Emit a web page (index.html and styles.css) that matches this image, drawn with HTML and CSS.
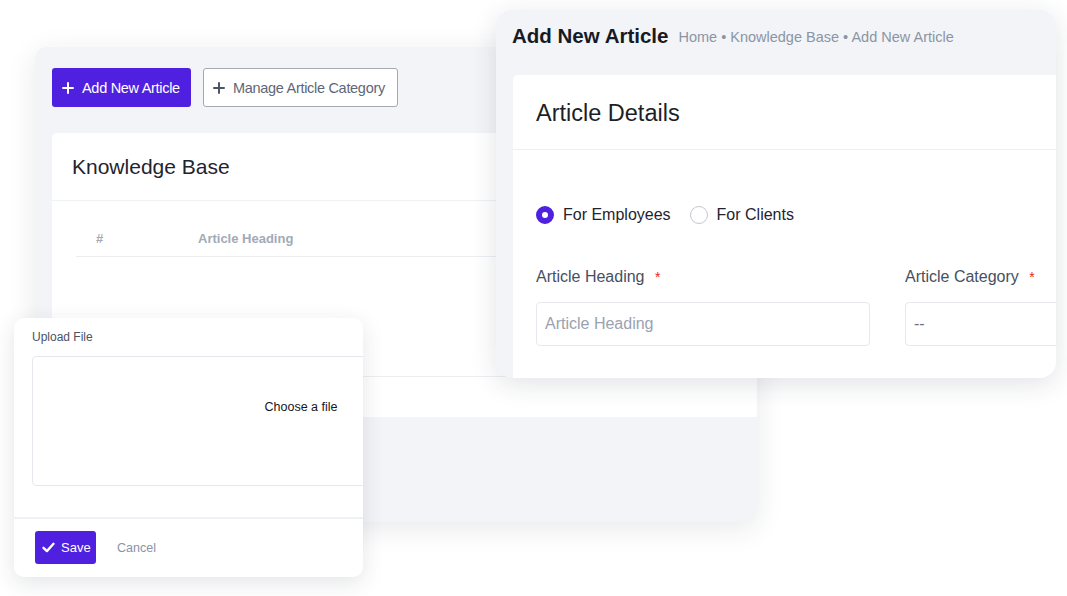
FILE: index.html
```html
<!DOCTYPE html>
<html lang="en">
<head>
<meta charset="UTF-8">
<meta name="viewport" content="width=device-width, initial-scale=1.0">
<title>Knowledge Base</title>
<link rel="stylesheet" href="styles.css">
</head>
<body>

<div class="stage">

  <!-- back window: knowledge base list -->
  <div class="window kb-window">
    <div class="toolbar">
      <button class="btn btn-primary">
        <svg width="12" height="12" viewBox="0 0 12 12"><path d="M6 1v10M1 6h10" stroke="#fff" stroke-width="2" stroke-linecap="round"/></svg>
        Add New Article
      </button>
      <button class="btn btn-outline">
        <svg width="12" height="12" viewBox="0 0 12 12"><path d="M6 1v10M1 6h10" stroke="#4b5563" stroke-width="2" stroke-linecap="round"/></svg>
        Manage Article Category
      </button>
    </div>

    <div class="kb-card">
      <div class="card-header">Knowledge Base</div>
      <div class="kb-table">
        <div class="kb-head">
          <span class="col-num">#</span>
          <span class="col-heading">Article Heading</span>
        </div>
        <div class="kb-rows"></div>
      </div>
      <div class="kb-foot"></div>
    </div>
  </div>

  <!-- front window: add new article -->
  <div class="window article-window">
    <div class="page-title">
      <h1>Add New Article</h1>
      <span class="breadcrumb">Home &bull; Knowledge Base &bull; Add New Article</span>
    </div>

    <div class="article-card">
      <div class="article-card-header">Article Details</div>
      <div class="article-body">
        <div class="radio-row">
          <label class="radio"><span class="radio-dot checked"></span>For Employees</label>
          <label class="radio"><span class="radio-dot"></span>For Clients</label>
        </div>
        <div class="form-row">
          <div class="field field-heading">
            <div class="field-label">Article Heading <span class="req">*</span></div>
            <div class="input placeholder">Article Heading</div>
          </div>
          <div class="field field-category">
            <div class="field-label">Article Category <span class="req">*</span></div>
            <div class="input">--</div>
          </div>
        </div>
      </div>
    </div>
  </div>

  <!-- upload modal -->
  <div class="window upload-window">
    <div class="upload-label">Upload File</div>
    <div class="dropzone">Choose a file</div>
    <div class="upload-footer">
      <button class="btn-save">
        <svg width="13" height="11" viewBox="0 0 13 11"><path d="M1.5 5.8l3.4 3.3L11.5 1.8" fill="none" stroke="#fff" stroke-width="2.4" stroke-linecap="round" stroke-linejoin="round"/></svg>
        Save
      </button>
      <span class="btn-cancel">Cancel</span>
    </div>
  </div>

</div>

</body>
</html>
```

FILE: styles.css
```css
body {
  font-family: 'Liberation Sans', Arial, Helvetica, sans-serif;
  background-color: #ffffff;
  margin: 0;
  padding: 0;
}

.stage {
  position: relative;
  width: 1067px;
  height: 596px;
  overflow: hidden;
  background-color: #ffffff;
}

.window {
  position: absolute;
  box-sizing: border-box;
  overflow: hidden;
}

/* ---------- back window ---------- */

.kb-window {
  left: 35px;
  top: 47px;
  width: 722px;
  height: 475px;
  padding: 21px 0 0 17px;
  background-color: #f3f4f7;
  border-radius: 12px;
  box-shadow: 0px 6px 28px rgba(30, 40, 60, 0.10);
}

.toolbar {
  display: flex;
  gap: 12px;
}

.btn {
  display: flex;
  align-items: center;
  gap: 8px;
  height: 39px;
  padding: 0 10px;
  border-radius: 3px;
  font-family: inherit;
  font-size: 14.5px;
  letter-spacing: -0.3px;
  white-space: nowrap;
  box-sizing: border-box;
  cursor: pointer;
}

.btn-primary {
  width: 139px;
  background-color: #5020e0;
  border: none;
  color: #ffffff;
}

.btn-outline {
  width: 195px;
  padding: 0 9px;
  background-color: #ffffff;
  border: 1px solid #a4a9b3;
  color: #5f6675;
}

.kb-card {
  margin-top: 26px;
  background-color: #ffffff;
  border-radius: 5px 0 0 0;
}

.card-header {
  height: 67px;
  display: flex;
  align-items: center;
  padding-left: 20px;
  font-size: 21px;
  color: #1f2430;
  border-bottom: 1px solid #eff1f4;
}

.kb-table {
  padding-left: 24px;
}

.kb-head {
  height: 56px;
  display: flex;
  align-items: flex-end;
  padding-bottom: 10px;
  box-sizing: border-box;
  border-bottom: 1px solid #eceef2;
  font-size: 13px;
  font-weight: bold;
  color: #a3aab6;
}

.col-num {
  width: 102px;
  padding-left: 20px;
}

.kb-rows {
  height: 119px;
  border-bottom: 1px solid #eceef2;
}

.kb-foot {
  height: 40px;
}

/* ---------- front window ---------- */

.article-window {
  left: 496px;
  top: 10px;
  width: 560px;
  height: 368px;
  padding: 0 0 0 16px;
  background-color: #f3f4f7;
  border-radius: 16px;
  box-shadow: 0px 6px 26px rgba(30, 40, 60, 0.13);
}

.page-title {
  height: 52px;
  display: flex;
  align-items: center;
  gap: 10px;
  box-sizing: border-box;
}

.page-title h1 {
  margin: 0;
  font-size: 20.5px;
  font-weight: bold;
  color: #161a24;
}

.breadcrumb {
  font-size: 14.5px;
  color: #8b94a5;
  padding-top: 1px;
}

.article-card {
  margin: 13px 0 0 1px;
  width: 600px;
  height: 400px;
  background-color: #ffffff;
  border-radius: 5px 0 0 0;
}

.article-card-header {
  height: 75px;
  display: flex;
  align-items: center;
  padding: 3px 0 0 23px;
  font-size: 23.5px;
  color: #1b1f29;
  border-bottom: 1px solid #edf0f4;
  box-sizing: border-box;
}

.article-body {
  padding: 53px 0 0 23px;
}

.radio-row {
  display: flex;
  gap: 19px;
  height: 24px;
  align-items: center;
}

.radio {
  display: flex;
  align-items: center;
  gap: 9px;
  font-size: 16px;
  color: #1f2430;
}

.radio-dot {
  width: 18px;
  height: 18px;
  border-radius: 50%;
  border: 1px solid #c3c8d1;
  box-sizing: border-box;
}

.radio-dot.checked {
  border: 6px solid #5020e0;
  background-color: #ffffff;
}

.form-row {
  display: flex;
  gap: 35px;
  margin-top: 40px;
}

.field-heading {
  width: 334px;
}

.field-category {
  width: 200px;
}

.field-label {
  height: 20px;
  line-height: 20px;
  font-size: 16px;
  color: #475063;
}

.req {
  color: #ee2222;
  margin-left: 6px;
  font-size: 14px;
}

.input {
  margin-top: 15px;
  height: 44px;
  border: 1px solid #e6e8ee;
  border-radius: 4px;
  box-sizing: border-box;
  display: flex;
  align-items: center;
  padding-left: 8px;
  font-size: 16px;
  color: #6b7280;
}

.input.placeholder {
  color: #9aa2b0;
}

/* ---------- upload modal ---------- */

.upload-window {
  left: 14px;
  top: 318px;
  width: 349px;
  height: 259px;
  background-color: #ffffff;
  border-radius: 10px;
  box-shadow: 0px 6px 22px rgba(30, 40, 60, 0.12);
}

.upload-label {
  padding: 11px 0 0 18px;
  height: 16px;
  line-height: 16px;
  font-size: 12px;
  color: #4b5263;
}

.dropzone {
  margin: 11px 0 0 18px;
  width: 538px;
  height: 130px;
  padding-top: 43px;
  border: 1px solid #e5e7ec;
  border-radius: 4px;
  box-sizing: border-box;
  text-align: center;
  font-size: 12.5px;
  color: #14171f;
}

.upload-footer {
  margin-top: 31px;
  border-top: 2px solid #eef1f6;
  display: flex;
  align-items: center;
  gap: 21px;
  padding: 12px 0 0 21px;
}

.btn-save {
  display: flex;
  align-items: center;
  gap: 6px;
  width: 61px;
  height: 33px;
  padding: 0 0 0 7px;
  border: none;
  border-radius: 3px;
  background-color: #5020e0;
  color: #ffffff;
  font-family: inherit;
  font-size: 13px;
  box-sizing: border-box;
}

.btn-cancel {
  font-size: 12.5px;
  color: #8a93a6;
}
```
